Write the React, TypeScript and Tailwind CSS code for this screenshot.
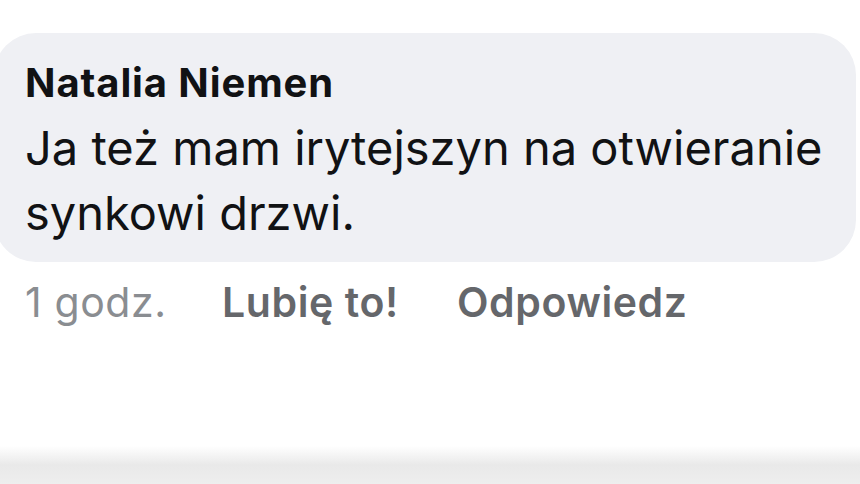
export default function App() {
  return (
    <div
      className="relative w-[860px] h-[484px] overflow-hidden bg-white"
      style={{ fontFamily: "Inter, 'Noto Sans', sans-serif" }}
    >
      <div className="pt-[33px]">
        <div className="-ml-[6px] w-[862px] h-[229px] rounded-[42px] bg-[#eff0f4] pl-[31px] pt-[26px]">
          <div className="text-[40px] leading-[48px] font-bold text-[#111214] tracking-[0.9px]">
            Natalia Niemen
          </div>
          <div className="mt-[8px] text-[47px] leading-[65px] text-[#111214]">
            Ja też mam irytejszyn na otwieranie
            <br />
            synkowi drzwi.
          </div>
        </div>
      </div>
      <div className="flex items-center pl-[25px] pt-[16px] text-[41px] leading-[48px] tracking-[0.6px]">
        <span className="text-[#8a8d91] w-[197px]">1 godz.</span>
        <span className="font-semibold text-[#65676b] w-[235px]">Lubię to!</span>
        <span className="font-semibold text-[#65676b]">Odpowiedz</span>
      </div>
      <div className="absolute left-0 right-0 bottom-0 h-[38px] bg-gradient-to-b from-white via-[#e9e9e9] to-[#eeeeee]" />
    </div>
  );
}
